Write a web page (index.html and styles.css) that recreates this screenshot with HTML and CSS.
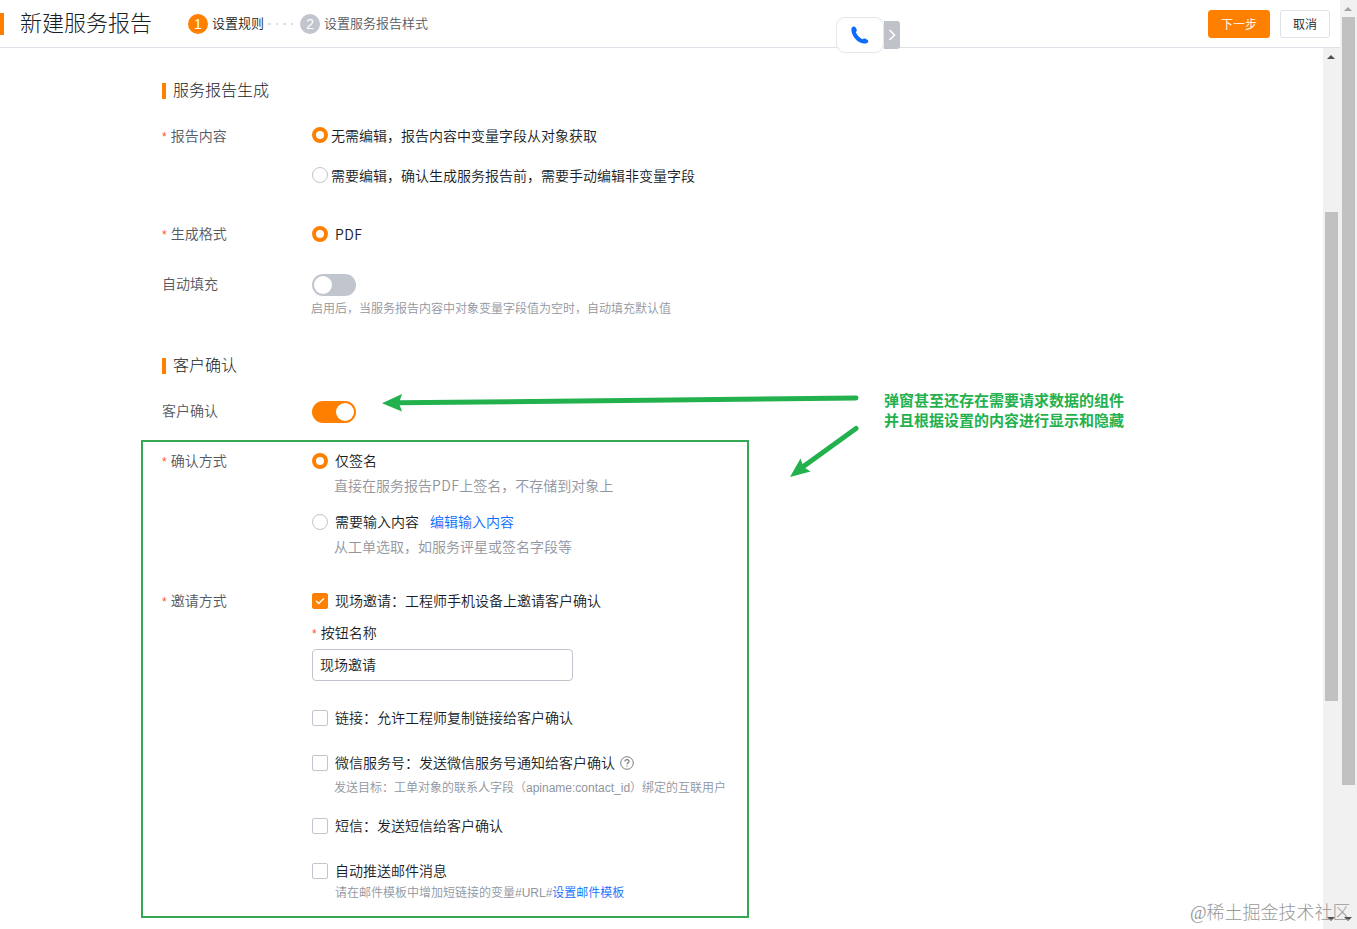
FILE: index.html
```
<!DOCTYPE html>
<html lang="zh-CN">
<head>
  <meta charset="UTF-8">
  <meta name="viewport" content="width=device-width, initial-scale=1.0">
  <title>新建服务报告</title>
  <link rel="stylesheet" href="styles.css">
</head>
<body>

<div class="app">
  <div class="main">
    <header class="header">
      <span class="header-mark"></span>
      <h1>新建服务报告</h1>
      <div class="steps">
        <span class="step-num active">1</span>
        <span class="step-name active">设置规则</span>
        <span class="step-dots"><i></i><i></i><i></i><i></i></span>
        <span class="step-num">2</span>
        <span class="step-name">设置服务报告样式</span>
      </div>
      <div class="actions">
        <button class="btn btn-primary">下一步</button>
        <button class="btn">取消</button>
      </div>
      <div class="call">
        <div class="call-box">
          <svg width="20" height="20" viewBox="0 0 20 20">
            <path d="M1.500 3.200C2.200 1.500 4.400 .9 5.500 2.200L6.700 4.600C7.200 5.700 6.500 6.500 5.800 7.300C7.300 10.400 9.300 12.600 12.200 14.200C13.200 13.500 14.100 13.200 15.100 13.600L17.700 15C18.900 16 18 17.700 16.500 18.300C9 20.300 .2 10.500 1.500 3.200Z" fill="#0c6cff"/>
          </svg>
        </div>
        <div class="call-toggle">
          <svg width="8" height="12" viewBox="0 0 8 12"><path d="M1.500 1L6.500 6L1.500 11" fill="none" stroke="#fff" stroke-width="1.500"/></svg>
        </div>
      </div>
    </header>

    <div class="body">
      <div class="form">
        <h2>服务报告生成</h2>

        <div class="row row-content">
          <div class="label"><em>*</em>报告内容</div>
          <div class="field">
            <div class="option tight"><span class="radio checked"></span>无需编辑，报告内容中变量字段从对象获取</div>
            <div class="option tight gap-20"><span class="radio"></span>需要编辑，确认生成服务报告前，需要手动编辑非变量字段</div>
          </div>
        </div>

        <div class="row row-format">
          <div class="label"><em>*</em>生成格式</div>
          <div class="field">
            <div class="option"><span class="radio checked"></span><span class="latin">PDF</span></div>
          </div>
        </div>

        <div class="row row-fill">
          <div class="label">自动填充</div>
          <div class="field">
            <div class="switch"></div>
            <div class="tip tip-switch">启用后，当服务报告内容中对象变量字段值为空时，自动填充默认值</div>
          </div>
        </div>

        <h2 class="title-confirm">客户确认</h2>

        <div class="row row-confirm">
          <div class="label">客户确认</div>
          <div class="field">
            <div class="switch on"></div>
          </div>
        </div>

        <div class="row row-way">
          <div class="label"><em>*</em>确认方式</div>
          <div class="field">
            <div class="option"><span class="radio checked"></span>仅签名</div>
            <div class="desc">直接在服务报告<span class="latin">PDF</span>上签名，不存储到对象上</div>
            <div class="option gap-16"><span class="radio"></span>需要输入内容<a class="link-edit">编辑输入内容</a></div>
            <div class="desc">从工单选取，如服务评星或签名字段等</div>
          </div>
        </div>

        <div class="row row-invite">
          <div class="label"><em>*</em>邀请方式</div>
          <div class="field">
            <div class="option">
              <span class="checkbox checked"><svg width="10" height="8" viewBox="0 0 10 8"><path d="M1 3.800L3.800 6.500L9 1.200" fill="none" stroke="#fff" stroke-width="1.300"/></svg></span>现场邀请：工程师手机设备上邀请客户确认
            </div>
            <div class="sub-label"><em>*</em>按钮名称</div>
            <input class="input" type="text" value="现场邀请">
            <div class="option gap-27"><span class="checkbox"></span>链接：允许工程师复制链接给客户确认</div>
            <div class="option gap-25">
              <span class="checkbox"></span>微信服务号：发送微信服务号通知给客户确认
              <svg class="help" width="14" height="14" viewBox="0 0 14 14" fill="none" stroke="#777b80">
                <circle cx="7" cy="7" r="6.300"/>
                <path d="M5 5.600C5 4.300 5.900 3.700 7 3.700C8.100 3.700 9 4.400 9 5.400C9 6.700 7 6.800 7 8.300M7 9.400V10.600" stroke-width="1.200"/>
              </svg>
            </div>
            <div class="tip">发送目标：工单对象的联系人字段（apiname:contact_id）绑定的互联用户</div>
            <div class="option gap-18"><span class="checkbox"></span>短信：发送短信给客户确认</div>
            <div class="option gap-25"><span class="checkbox"></span>自动推送邮件消息</div>
            <div class="tip tip-mail">请在邮件模板中增加短链接的变量#URL#<a>设置邮件模板</a></div>
          </div>
        </div>
      </div>

      <div class="scroll scroll-inner">
        <span class="arrow up"></span>
        <span class="thumb"></span>
        <span class="arrow down"></span>
      </div>
    </div>
  </div>

  <div class="scroll scroll-outer">
    <span class="arrow up"></span>
    <span class="thumb"></span>
    <span class="arrow down"></span>
  </div>
</div>

<!-- 标注 -->
<div class="mark-box"></div>
<svg class="mark-arrows" width="480" height="90" viewBox="380 390 480 90">
  <g stroke="#23b14d" stroke-width="5" stroke-linecap="round">
    <path d="M398 402.800L856 398"/>
    <path d="M802 467.500L856 428.500"/>
  </g>
  <g fill="#23b14d">
    <path d="M382 403.200L402 394L399 403L402 411.500Z"/>
    <path d="M790 477L800.500 458.500L803.500 467L810.500 471.500Z"/>
  </g>
</svg>
<div class="mark-text">弹窗甚至还存在需要请求数据的组件<br>并且根据设置的内容进行显示和隐藏</div>
<div class="watermark">@稀土掘金技术社区</div>

</body>
</html>
```
FILE: styles.css
```
* {
  box-sizing: border-box;
}
body {
  margin: 0;
  font-family: "Liberation Sans", "Noto Sans CJK SC", sans-serif;
  font-size: 14px;
  font-weight: 350;
  line-height: 20px;
  color: #181c25;
  background: #fff;
  overflow: hidden;
}
h1, h2 {
  margin: 0;
  font-weight: 300;
}
a {
  color: #0c6cff;
}
.app {
  display: flex;
  height: 929px;
}
.main {
  flex: 1;
  display: flex;
  flex-direction: column;
}

/* header */
.header {
  position: relative;
  display: flex;
  align-items: center;
  height: 48px;
  padding-right: 10px;
  border-bottom: 1px solid #dee1e8;
}
.header-mark {
  width: 4px;
  height: 22px;
  background: #ff8000;
}
h1 {
  margin-left: 16px;
  font-size: 22px;
  line-height: 30px;
}
.steps {
  display: flex;
  align-items: center;
  margin-left: 36px;
  font-size: 13px;
}
.step-num {
  width: 20px;
  height: 20px;
  border-radius: 50%;
  background: #c1c5ce;
  color: #fff;
  font-size: 14px;
  text-align: center;
}
.step-num.active {
  background: #ff8000;
}
.step-name {
  margin-left: 4px;
  color: #545861;
}
.step-name.active {
  color: #181c25;
}
.step-dots {
  display: flex;
  gap: 5px;
  margin: 0 7px 0 4px;
}
.step-dots i {
  width: 2.5px;
  height: 2px;
  background: #dcdfe6;
}
.actions {
  display: flex;
  gap: 10px;
  margin-left: auto;
}
.btn {
  width: 50px;
  height: 28px;
  padding: 0;
  border: 1px solid #dee1e8;
  border-radius: 3px;
  background: #fff;
  color: #181c25;
  font-family: inherit;
  font-size: 12px;
  font-weight: 350;
}
.btn-primary {
  width: 62px;
  border-color: #ff8000;
  background: #ff8000;
  color: #fff;
}
.call {
  position: absolute;
  left: 836px;
  top: 17px;
  display: flex;
  align-items: center;
}
.call-box {
  display: flex;
  align-items: center;
  justify-content: center;
  width: 48px;
  height: 36px;
  border: 1px solid #e4e6ec;
  border-radius: 9px;
  background: #fff;
}
.call-toggle {
  display: flex;
  align-items: center;
  justify-content: center;
  width: 16px;
  height: 28px;
  border-radius: 0 3px 3px 0;
  background: #bfc2c9;
}

/* form */
.body {
  flex: 1;
  display: flex;
}
.form {
  flex: 1;
  padding: 33px 0 0 162px;
}
h2 {
  display: flex;
  align-items: center;
  font-size: 16px;
  line-height: 20px;
}
h2::before {
  content: "";
  width: 4px;
  height: 16px;
  margin-right: 7px;
  background: #ff8000;
}
.title-confirm {
  margin-top: 37px;
}
.row {
  display: flex;
}
.row-content {
  margin-top: 25px;
}
.row-format {
  margin-top: 38px;
}
.row-fill {
  margin-top: 29px;
}
.row-confirm {
  margin-top: 25px;
}
.row-way {
  margin-top: 28px;
}
.row-invite {
  margin-top: 34px;
}
.label {
  width: 150px;
  color: #545861;
}
em {
  margin-right: 4px;
  color: #ff522a;
  font-size: 12px;
  font-style: normal;
}
.latin {
  font-family: "Noto Sans CJK SC", sans-serif;
  line-height: 1;
  letter-spacing: 0.4px;
}
.option {
  display: flex;
  align-items: center;
  height: 20px;
}
.gap-16 {
  margin-top: 16px;
}
.gap-18 {
  margin-top: 18px;
}
.gap-20 {
  margin-top: 20px;
}
.gap-25 {
  margin-top: 25px;
}
.gap-27 {
  margin-top: 27px;
}
.radio {
  width: 16px;
  height: 16px;
  margin-right: 7px;
  border: 1px solid #c1c5ce;
  border-radius: 50%;
}
.radio.checked {
  border: 4px solid #ff8000;
}
.tight .radio {
  margin: 0 3px 2px 0;
}
.checkbox {
  display: flex;
  align-items: center;
  justify-content: center;
  width: 16px;
  height: 16px;
  margin-right: 7px;
  border: 1px solid #c1c5ce;
  border-radius: 2px;
}
.checkbox.checked {
  border-color: #ff8000;
  background: #ff8000;
}
.switch {
  width: 44px;
  height: 22px;
  padding: 2px;
  border-radius: 11px;
  background: #c1c5ce;
}
.switch::before {
  content: "";
  display: block;
  width: 18px;
  height: 18px;
  border-radius: 50%;
  background: #fff;
}
.switch.on {
  background: #ff8000;
}
.switch.on::before {
  margin-left: auto;
}
.desc {
  margin: 5px 0 0 22px;
  color: #91959e;
}
.tip {
  margin: 5px 0 0 22px;
  font-size: 12px;
  color: #91959e;
}
.tip-switch {
  margin: 3px 0 0 -1px;
}
.tip-mail {
  margin: 2px 0 0 23px;
}
.link-edit {
  margin-left: 11px;
}
.sub-label {
  margin-top: 12px;
}
.input {
  display: block;
  width: 261px;
  height: 32px;
  margin-top: 5px;
  padding: 0 7px 2px;
  border: 1px solid #c1c5ce;
  border-radius: 4px;
  color: #181c25;
  font: inherit;
}
.help {
  margin-left: 5px;
}

/* scrollbars */
.scroll {
  display: flex;
  flex-direction: column;
  align-items: center;
  width: 17px;
  background: #f1f1f1;
}
.scroll .thumb {
  width: 13px;
  background: #c1c1c1;
}
.scroll-inner .thumb {
  height: 489px;
  margin-top: 153px;
}
.scroll-outer .thumb {
  height: 768px;
  margin-top: 6px;
}
.arrow {
  margin-right: 1px;
  border: 4px solid transparent;
}
.arrow.up {
  margin-top: 7px;
  border-top: 0;
  border-bottom-color: #505050;
}
.scroll-outer .arrow.up {
  border-bottom-color: #a3a3a3;
}
.arrow.down {
  margin-top: auto;
  margin-bottom: 8px;
  border-bottom: 0;
  border-top-color: #505050;
}

/* annotations */
.mark-box {
  position: absolute;
  left: 141px;
  top: 440px;
  width: 608px;
  height: 478px;
  border: 2px solid #32a852;
}
.mark-arrows {
  position: absolute;
  left: 380px;
  top: 390px;
}
.mark-text {
  position: absolute;
  left: 884px;
  top: 391px;
  color: #23b14d;
  font-size: 15px;
  font-weight: 700;
}
.watermark {
  position: absolute;
  left: 1190px;
  top: 903px;
  color: #999;
  font-family: "Liberation Serif", "Noto Sans CJK SC", serif;
  font-size: 18px;
  font-weight: 300;
  white-space: nowrap;
}
```
